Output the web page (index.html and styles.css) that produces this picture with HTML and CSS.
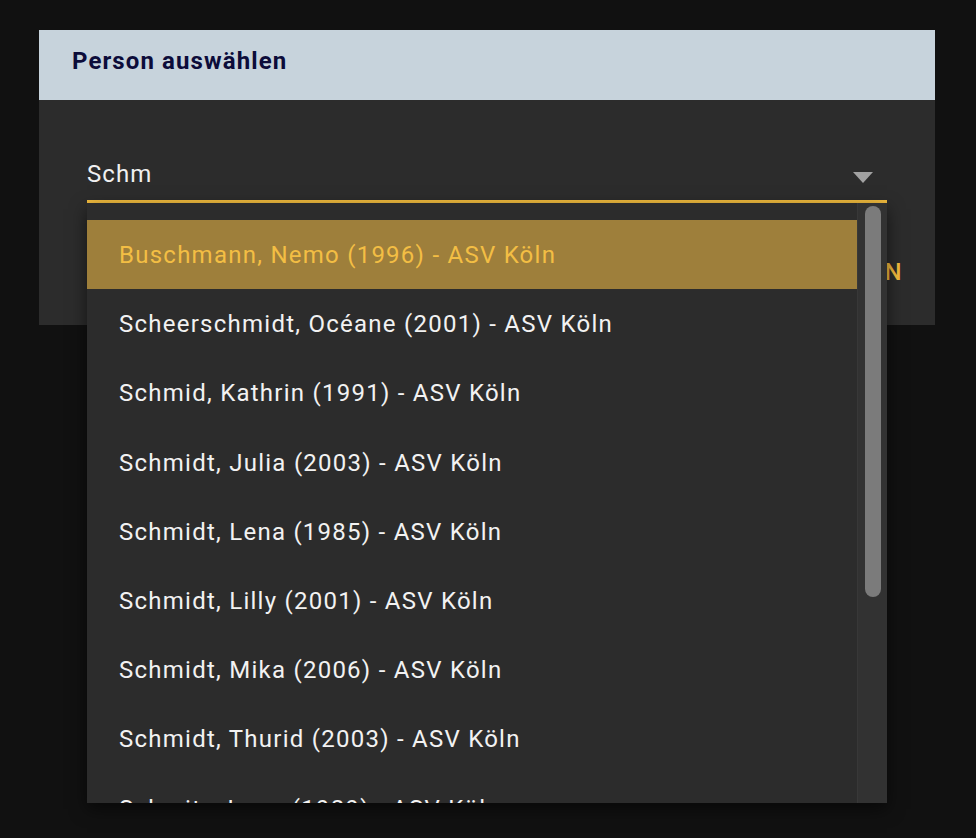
FILE: index.html
```html
<!DOCTYPE html>
<html lang="de">
<head>
<meta charset="utf-8">
<title>Person auswählen</title>
<link rel="stylesheet" href="styles.css">
</head>
<body>
<div class="dialog">
  <div class="dialog-header">Person auswählen</div>
  <div class="dialog-body">
    <div class="field">
      <div class="field-input">
        <span class="field-value">Schm</span>
        <span class="field-arrow"></span>
      </div>
      <div class="dropdown">
        <ul class="options">
          <li class="option active">Buschmann, Nemo (1996) - ASV Köln</li>
          <li class="option">Scheerschmidt, Océane (2001) - ASV Köln</li>
          <li class="option">Schmid, Kathrin (1991) - ASV Köln</li>
          <li class="option">Schmidt, Julia (2003) - ASV Köln</li>
          <li class="option">Schmidt, Lena (1985) - ASV Köln</li>
          <li class="option">Schmidt, Lilly (2001) - ASV Köln</li>
          <li class="option">Schmidt, Mika (2006) - ASV Köln</li>
          <li class="option">Schmidt, Thurid (2003) - ASV Köln</li>
          <li class="option">Schmitz, Lena (1989) - ASV Köln</li>
        </ul>
        <div class="scroll-track"><div class="scroll-thumb"></div></div>
      </div>
    </div>
    <div class="actions">
      <button class="btn">ABBRECHEN</button>
      <button class="btn">AUSWÄHLEN</button>
    </div>
  </div>
</div>
</body>
</html>
```

FILE: styles.css
```css
html, body {
  margin: 0;
  padding: 0;
  background: #111111;
  font-family: Roboto, "Liberation Sans", sans-serif;
}
body {
  padding: 30px 41px 0 39px;
  height: 838px;
  box-sizing: border-box;
}
.dialog {
  width: 896px;
  background: #2c2c2c;
}
.dialog-header {
  height: 70px;
  background: #c7d3dc;
  color: #0c0c3a;
  font-weight: 700;
  font-size: 24px;
  letter-spacing: 1.1px;
  display: flex;
  align-items: center;
  padding: 0 0 8px 33px;
  box-sizing: border-box;
}
.dialog-body {
  padding: 48px 33px 0 48px;
  height: 225px;
  box-sizing: border-box;
}
.field {
  position: relative;
  width: 800px;
}
.field-input {
  height: 55px;
  border-bottom: 3px solid #f1bb3e;
  box-sizing: border-box;
  display: flex;
  align-items: center;
  justify-content: space-between;
}
.field-value {
  color: #f0f0f0;
  font-size: 24px;
  letter-spacing: 1.1px;
  line-height: 52px;
}
.field-arrow {
  width: 0;
  height: 0;
  border-left: 10px solid transparent;
  border-right: 10px solid transparent;
  border-top: 11px solid #a2a2a2;
  margin-right: 14px;
  margin-top: 6px;
}
.dropdown {
  position: absolute;
  top: 100%;
  left: 0;
  width: 800px;
  height: 600px;
  background: #2c2c2c;
  display: flex;
  box-shadow: 0 6px 16px rgba(0,0,0,0.55);
  z-index: 2;
}
.options {
  list-style: none;
  margin: 0;
  padding: 17px 0 0;
  flex: 1;
  overflow: hidden;
}
.option {
  height: 69.2px;
  line-height: 67.2px;
  padding: 2px 0 0 32px;
  box-sizing: border-box;
  color: #f2f2f2;
  font-size: 24px;
  letter-spacing: 1.25px;
  white-space: nowrap;
}
.option.active {
  background: #9e7f3b;
  color: #f3be44;
}
.scroll-track {
  width: 30px;
  background: #323232;
  border-left: 1px solid #383838;
  box-sizing: border-box;
  padding: 3px 0 0 7px;
}
.scroll-thumb {
  width: 16px;
  height: 391px;
  border-radius: 8px;
  background: #7b7b7b;
}
.actions {
  display: flex;
  justify-content: flex-end;
  gap: 24px;
  margin-top: 52px;
}
.btn {
  background: none;
  border: none;
  padding: 0;
  color: #f1bb3e;
  font-family: Roboto, "Liberation Sans", sans-serif;
  font-size: 24px;
  font-weight: 500;
  letter-spacing: 0.5px;
  line-height: 34px;
}
```
